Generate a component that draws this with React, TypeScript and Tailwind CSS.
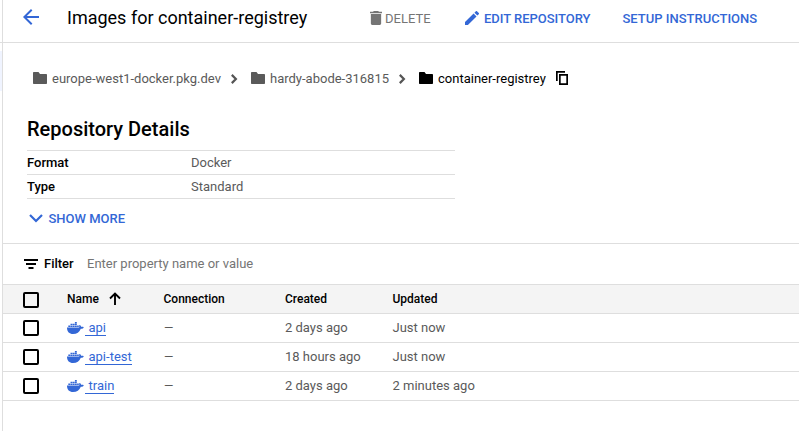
import type { ReactNode } from "react";

function Icon({ d, box = "0 0 24 24", className }: { d: string; box?: string; className: string }) {
  return (
    <svg viewBox={box} preserveAspectRatio="none" fill="currentColor" className={"shrink-0 " + className}>
      <path d={d} />
    </svg>
  );
}

const FOLDER = "M5.500 0H1C.4 0 0 .4 0 1v10c0 .6.4 1 1 1h12c.6 0 1-.4 1-1V3c0-.6-.4-1-1-1H7z";
const BACK = "M20 11H7.83l5.59-5.59L12 4l-8 8 8 8 1.41-1.41L7.83 13H20v-2z";
const TRASH = "M6 19c0 1.1.9 2 2 2h8c1.1 0 2-.9 2-2V7H6v12zM19 4h-3.5l-1-1h-5l-1 1H5v2h14V4z";
const PENCIL = "M3 17.25V21h3.75L17.81 9.94l-3.75-3.75L3 17.25zM20.71 7.04a1 1 0 0 0 0-1.41l-2.34-2.34a1 1 0 0 0-1.41 0l-1.83 1.83 3.75 3.75 1.83-1.83z";

function Folder({ className }: { className?: string }) {
  return <Icon d={FOLDER} box="0 0 14 12" className={"mr-[5px] mb-[2px] h-3 w-[14px] " + (className ?? "")} />;
}

function Chevron() {
  return (
    <svg viewBox="0 0 8 10" className="h-[10px] w-2 shrink-0 text-[#555]" fill="none" stroke="currentColor" strokeWidth="2.200">
      <path d="M.8 .9 4.900 5 .8 9.1" />
    </svg>
  );
}

function DockerIcon() {
  return (
    <svg viewBox="0 0 17 12" className="h-3 w-[17px] shrink-0 text-[#3367d6]" fill="currentColor">
      <path d="M0 5.5h12.1c.3-.7.2-1.200-.1-1.900l.9-.6c.7.5 1.100 1.100 1.200 1.800.9-.2 1.900-.1 2.700.4-.5 1.200-1.600 1.600-3 1.500C12.500 10.200 9.800 12 6 12 2.200 12-.1 9.700 0 5.500z" />
      <path d="M1.300 3.400h1.900v1.700H1.300zM3.500 3.400h1.900v1.700H3.500zM5.700 3.400h1.900v1.700H5.700zM7.900 3.400h1.900v1.700H7.900zM10.100 3.400h1.700v1.700h-1.700zM3.500 1.700h1.900v1.400H3.500zM5.700 1.700h1.900v1.400H5.700zM7.900 1.700h1.900v1.400H7.900zM7.900 0h1.900v1.400H7.900z" />
    </svg>
  );
}

function Checkbox({ className }: { className?: string }) {
  return <span className={"block h-4 w-4 rounded-[2px] border-2 border-black " + (className ?? "")} />;
}

function Row({ children, head }: { children: ReactNode; head?: boolean }) {
  return (
    <div
      className={
        "grid h-[29px] grid-cols-[44px_96.5px_121.5px_107.5px_1fr] items-center border-b border-[#dedede] pl-5 " +
        (head ? "bg-[#f4f4f4] text-[12px] font-medium text-black" : "text-[13px] text-[#5a5a5a]")
      }
    >
      {children}
    </div>
  );
}

const images = [
  { name: "api", created: "2 days ago", updated: "Just now" },
  { name: "api-test", created: "18 hours ago", updated: "Just now" },
  { name: "train", created: "2 days ago", updated: "2 minutes ago" },
];

export default function App() {
  return (
    <div className="flex h-[431px] w-[799px] flex-col overflow-hidden bg-white font-[Roboto,sans-serif] text-[13px] leading-5 whitespace-nowrap text-black">
      <header className="flex h-[43px] shrink-0 border-b border-[#dedede]">
        <div className="w-[2px] shrink-0" />
        <div className="flex flex-1 items-center border-l border-[#dedede] pb-[4px]">
          <Icon d={BACK} className="ml-[16px] mb-[4px] h-6 w-6 text-[#3367d6]" />
          <h1 className="-mt-[2px] ml-6 w-[302px] text-[18px]">Images for container-registrey</h1>
          <button className="flex w-[96px] items-center text-[#757575]">
            <Icon d={TRASH} box="5 3 14 18" className="mb-[2px] mr-[3px] ml-px h-[14px] w-3" />
            DELETE
          </button>
          <button className="flex w-[157.5px] items-center font-medium tracking-[-0.03px] text-[#3367d6]">
            <Icon d={PENCIL} box="3 3 18 18" className="mb-[2px] mr-[5px] h-[14px] w-[14px]" />
            EDIT REPOSITORY
          </button>
          <button className="font-medium text-[#3367d6]">SETUP INSTRUCTIONS</button>
        </div>
      </header>
      <div className="flex flex-1">
        <div className="w-[2px] shrink-0 pt-2">
          <div className="h-10 bg-[#f0f4ff]" />
        </div>
        <main className="flex flex-1 flex-col border-l border-[#dedede]">
          <nav className="mt-[26px] flex h-5 items-center pl-[30px] text-[#5a5a5a]">
            <Folder />
            <span className="w-[179px]">europe-west1-docker.pkg.dev</span>
            <Chevron />
            <Folder className="ml-3" />
            <span className="w-[129px]">hardy-abode-316815</span>
            <Chevron />
            <Folder className="ml-3 text-black" />
            <span className="text-black">container-registrey</span>
            <svg viewBox="0 0 12 14" className="mb-[2px] ml-[10px] h-[14px] w-3 text-black" fill="none" stroke="currentColor" strokeWidth="1.700">
              <path d="M.85 10V.85H9M3.850 3.850H11.150V13.150H3.850Z" />
            </svg>
          </nav>
          <h2 className="mt-[26px] ml-6 h-7 text-[20px] leading-7 font-medium">Repository Details</h2>
          <dl className="mt-[7px] ml-6 w-[428px] border-t border-[#dedede]">
            <div className="flex h-6 items-center border-b border-[#dedede]">
              <dt className="w-[164px] font-medium">Format</dt>
              <dd className="text-[#5a5a5a]">Docker</dd>
            </div>
            <div className="flex h-6 items-center border-b border-[#dedede]">
              <dt className="w-[164px] font-medium">Type</dt>
              <dd className="text-[#5a5a5a]">Standard</dd>
            </div>
          </dl>
          <button className="mt-[10px] ml-[26px] flex h-5 items-center font-medium text-[#3367d6]">
            <svg viewBox="0 0 14 9" className="mr-[5.5px] mb-px h-[9px] w-[14px]" fill="none" stroke="currentColor" strokeWidth="2.200">
              <path d="M1 1 7 7 13 1" />
            </svg>
            SHOW MORE
          </button>
          <section className="mt-[14px] border-t border-[#dedede]">
            <div className="flex h-[41px] items-center border-b border-[#dedede] pl-[21px]">
              <svg viewBox="0 0 14 10" className="mr-[6px] h-[10px] w-[14px]" fill="currentColor">
                <path d="M0 0h14v2H0zM2 4h10v2H2zM4.500 8h5v2h-5z" />
              </svg>
              <span className="w-[43px] font-medium">Filter</span>
              <span className="text-[#757575]">Enter property name or value</span>
            </div>
            <Row head>
              <Checkbox className="mt-[2px]" />
              <div className="flex items-center">
                Name
                <svg viewBox="0 0 12 13" className="mb-[2px] ml-[10px] h-[13px] w-3" fill="none" stroke="currentColor" strokeWidth="1.900">
                  <path d="M6 13V1.500M1 6.500 6 1.500 11 6.500" />
                </svg>
              </div>
              <span>Connection</span>
              <span>Created</span>
              <span>Updated</span>
            </Row>
            {images.map((image) => (
              <Row key={image.name}>
                <Checkbox />
                <div className="flex items-center">
                  <DockerIcon />
                  <a className="mb-px ml-[1px] h-[17px] border-b border-[#3367d6] pl-[3.5px] leading-[18px] text-[#3367d6]">{image.name}</a>
                </div>
                <span className="pl-[.5px] text-[12px]">—</span>
                <span>{image.created}</span>
                <span>{image.updated}</span>
              </Row>
            ))}
          </section>
        </main>
      </div>
    </div>
  );
}
